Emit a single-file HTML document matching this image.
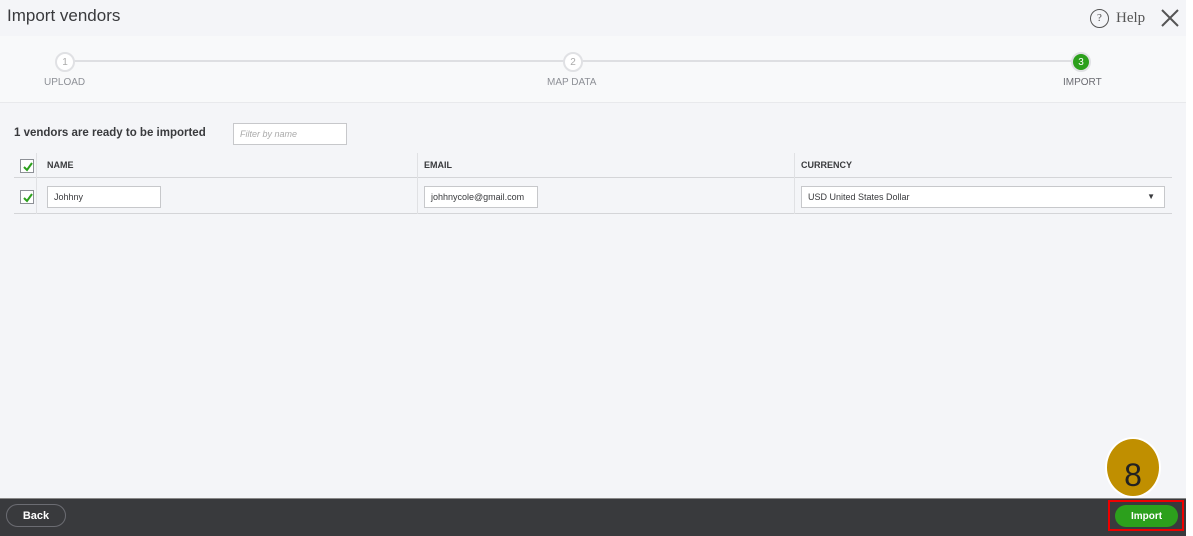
<!DOCTYPE html>
<html><head><style>
*{margin:0;padding:0;box-sizing:border-box}
body{width:1193px;height:536px;background:#fff;font-family:"Liberation Sans",sans-serif;position:relative;overflow:hidden}
.main{position:absolute;left:0;top:0;width:1186px;height:536px;background:#f4f5f8}
.abs{position:absolute}
.step{position:absolute;width:20px;height:20px;border-radius:50%;border:2px solid #e0e1e4;background:#fff;color:#aaa;font-size:10px;text-align:center;line-height:17px}
.lbl{position:absolute;font-size:10px;color:#8d9096;top:77px}
.chk{position:absolute;width:14px;height:14px;border:1px solid #8d9096;background:#fff}
.chk svg{position:absolute;left:1px;top:1px}
.inp{position:absolute;background:#fff;border:1px solid #c7c8cb;height:22px;font-size:9px;color:#393a3d;padding:0 6px;line-height:20px}
.th{position:absolute;top:160px;font-size:9px;font-weight:bold;color:#393a3d}
</style></head><body>
<div class="main">
<div class="abs" style="left:7px;top:6px;font-size:17px;color:#393a3d">Import vendors</div>
<div class="abs" style="left:1090px;top:9px;width:19px;height:19px;border:1.5px solid #555;border-radius:50%;font-size:11px;text-align:center;line-height:16px;color:#555;font-family:'Liberation Serif',serif">?</div>
<div class="abs" style="left:1116px;top:10px;font-size:15px;color:#555;font-family:'Liberation Serif',serif">Help</div>
<svg class="abs" style="left:1160px;top:8px" width="20" height="20"><path d="M2 2L18 18M18 2L2 18" stroke="#555" stroke-width="2"/></svg>
<div class="abs" style="left:0;top:36px;width:1186px;height:67px;background:#f8f9fa;border-bottom:1px solid #e8e9ec"></div>
<div class="abs" style="left:65px;top:60px;width:1017px;height:2px;background:#dedfe2"></div>
<div class="step" style="left:55px;top:52px">1</div>
<div class="step" style="left:563px;top:52px">2</div>
<div class="step" style="left:1071px;top:52px;background:#2ca01c;color:#fff">3</div>
<div class="lbl" style="left:44px">UPLOAD</div>
<div class="lbl" style="left:547px">MAP DATA</div>
<div class="lbl" style="left:1063px;color:#6b6c72">IMPORT</div>
<div class="abs" style="left:14px;top:127px;font-size:11.5px;font-weight:bold;color:#393a3d">1 vendors are ready to be imported</div>
<div class="inp" style="left:233px;top:123px;width:114px;color:#aaa;font-style:italic;font-size:9px">Filter by name</div>
<div class="abs" style="left:14px;top:177px;width:1158px;height:1px;background:#d4d5d8"></div>
<div class="abs" style="left:14px;top:213px;width:1158px;height:1px;background:#d4d5d8"></div>
<div class="abs" style="left:36px;top:153px;width:1px;height:61px;background:#e0e1e4"></div>
<div class="abs" style="left:417px;top:153px;width:1px;height:61px;background:#e0e1e4"></div>
<div class="abs" style="left:794px;top:153px;width:1px;height:61px;background:#e0e1e4"></div>
<div class="chk" style="left:20px;top:159px"><svg width="12" height="12"><path d="M2 6L5 9L10 2" stroke="#2ca01c" stroke-width="2" fill="none"/></svg></div>
<div class="chk" style="left:20px;top:190px"><svg width="12" height="12"><path d="M2 6L5 9L10 2" stroke="#2ca01c" stroke-width="2" fill="none"/></svg></div>
<div class="th" style="left:47px">NAME</div>
<div class="th" style="left:424px">EMAIL</div>
<div class="th" style="left:801px">CURRENCY</div>
<div class="inp" style="left:47px;top:186px;width:114px">Johhny</div>
<div class="inp" style="left:424px;top:186px;width:114px;overflow:hidden;white-space:nowrap">johhnycole@gmail.com</div>
<div class="inp" style="left:801px;top:186px;width:364px">USD United States Dollar<span style="position:absolute;right:9px;top:0;font-size:8px">▼</span></div>
<div class="abs" style="left:0;top:498px;width:1186px;height:38px;background:#393a3d;border-top:1px solid #888"></div>
<div class="abs" style="left:6px;top:504px;width:60px;height:23px;border:1px solid #6b6c72;border-radius:12px;color:#fff;font-size:11px;font-weight:bold;text-align:center;line-height:23px">Back</div>
<div class="abs" style="left:1108px;top:500px;width:76px;height:31px;border:2px solid #e00"></div>
<div class="abs" style="left:1115px;top:505px;width:63px;height:22px;background:#2ca01c;border-radius:11px;color:#fff;font-size:10px;font-weight:bold;text-align:center;line-height:23px">Import</div>
<div class="abs" style="left:1105px;top:437px;width:56px;height:61px;border-radius:50%;background:#c08f00;border:2px solid #fff;font-size:32px;color:#222;text-align:center;line-height:72px">8</div>
</div>
</body></html>
